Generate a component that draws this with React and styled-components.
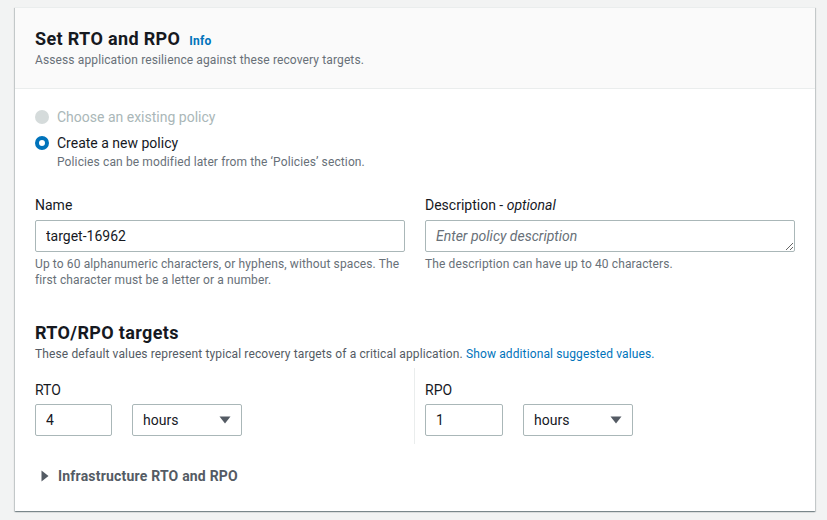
import React from "react";
import styled, { createGlobalStyle } from "styled-components";

const Global = createGlobalStyle`
  html, body { margin: 0; padding: 0; background: #f2f3f3; }
  body { font-family: Roboto, "Noto Sans", sans-serif; color: #16191f; -webkit-font-smoothing: antialiased; }
  * { box-sizing: border-box; }
`;

const Page = styled.div`
  padding: 7px 12px 8px 15px;
  height: 520px;
`;

const Card = styled.section`
  background: #fff;
  border-top: 1px solid #eaeded;
  box-shadow: 0 1px 1px 0 rgba(0, 28, 36, 0.3), 1px 1px 1px 0 rgba(0, 28, 36, 0.15),
    -1px 1px 1px 0 rgba(0, 28, 36, 0.15);
`;

const Header = styled.header`
  background: #fafafa;
  border-bottom: 1px solid #eaeded;
  padding: 20px 20px 20px;
`;

const TitleRow = styled.div`
  display: flex;
  align-items: baseline;
  gap: 9px;
`;

const Title = styled.h2`
  margin: 0;
  font-size: 18px;
  line-height: 22px;
  font-weight: 700;
  letter-spacing: 0.35px;
  color: #16191f;
`;

const InfoLink = styled.a`
  font-size: 12px;
  font-weight: 700;
  letter-spacing: 0.2px;
  color: #0073bb;
  text-decoration: none;
`;

const Desc = styled.p`
  margin: ${(p) => p.$mt || 0} 0 0;
  font-size: 12px;
  line-height: 16px;
  letter-spacing: 0.12px;
  color: ${(p) => p.$color || "#687078"};
`;

const Body = styled.div`
  padding: 18px 20px 25px;
`;

const RadioGroup = styled.div`
  display: flex;
  flex-direction: column;
  gap: 6px;
`;

const RadioRow = styled.label`
  display: grid;
  grid-template-columns: 14px 1fr;
  column-gap: 8px;
  align-items: center;
`;

const RadioDot = styled.span`
  width: 14px;
  height: 14px;
  border-radius: 50%;
  background: ${(p) => (p.$disabled ? "#d5dbdb" : "#fff")};
  border: ${(p) => (p.$checked ? "4px solid #0073bb" : p.$disabled ? "none" : "2px solid #aab7b8")};
`;

const RadioText = styled.span`
  font-size: 14px;
  line-height: 20px;
  color: ${(p) => (p.$disabled ? "#aab7b8" : "#16191f")};
`;

const RadioHint = styled.span`
  grid-column: 2;
  margin-top: 1px;
  font-size: 12px;
  line-height: 16px;
  letter-spacing: 0.12px;
  color: #687078;
`;

const FieldGrid = styled.div`
  display: grid;
  grid-template-columns: 1fr 1fr;
  column-gap: 20px;
  margin-top: 24px;
`;

const Field = styled.div`
  display: flex;
  flex-direction: column;
`;

const Label = styled.label`
  font-size: 14px;
  line-height: 22px;
  color: #16191f;
  margin-bottom: 4px;
  em { font-style: italic; }
`;

const TextInput = styled.input`
  width: ${(p) => p.$width || "100%"};
  height: 32px;
  border: 1px solid #aab7b8;
  border-radius: 2px;
  padding: 0 10px;
  font-family: inherit;
  font-size: 14px;
  color: #16191f;
  background: #fff;
  outline: none;
`;

const TextArea = styled.textarea`
  width: 100%;
  height: 32px;
  border: 1px solid #aab7b8;
  border-radius: 2px;
  padding: 5px 10px;
  font-family: inherit;
  font-size: 14px;
  line-height: 20px;
  color: #16191f;
  resize: vertical;
  outline: none;
  display: block;
  &::placeholder { color: #687078; font-style: italic; }
`;

const Hint = styled.p`
  margin: 4px 0 0;
  font-size: 12px;
  line-height: 16px;
  letter-spacing: 0.12px;
  color: #687078;
`;

const Section = styled.div`
  margin-top: 34px;
`;

const SubTitle = styled.h3`
  margin: 0;
  font-size: 18px;
  line-height: 22px;
  font-weight: 700;
  letter-spacing: 0.35px;
`;

const Link = styled.a`
  color: #0073bb;
  text-decoration: none;
`;

const Columns = styled.div`
  display: grid;
  grid-template-columns: 379px 1fr;
  margin-top: 6px;
`;

const Column = styled.div`
  padding: 11px 0 8px ${(p) => (p.$divider ? "10px" : "0")};
  border-left: ${(p) => (p.$divider ? "1px solid #eaeded" : "none")};
`;

const ColLabel = styled.div`
  font-size: 14px;
  line-height: 22px;
  margin-bottom: 3px;
`;

const Controls = styled.div`
  display: flex;
  gap: 20px;
`;

const Select = styled.div`
  width: 110px;
  height: 32px;
  border: 1px solid #aab7b8;
  border-radius: 2px;
  padding: 0 10px;
  display: flex;
  align-items: center;
  justify-content: space-between;
  font-size: 14px;
  color: #16191f;
`;

const Expander = styled.div`
  display: flex;
  align-items: center;
  gap: 9px;
  margin-top: 22px;
  padding-left: 6px;
  font-size: 14px;
  line-height: 20px;
  font-weight: 700;
  letter-spacing: 0.2px;
  color: #545b64;
`;

const Caret = ({ dir = "down" }) =>
  dir === "down" ? (
    <svg width="12" height="8" viewBox="0 0 12 8">
      <path d="M0.5 0.5 L11.5 0.5 L6 7.5 Z" fill="#545b64" />
    </svg>
  ) : (
    <svg width="8" height="12" viewBox="0 0 8 12">
      <path d="M0.5 0.5 L7.5 6 L0.5 11.5 Z" fill="#545b64" />
    </svg>
  );

const Target = ({ label, value, divider }) => (
  <Column $divider={divider}>
    <ColLabel>{label}</ColLabel>
    <Controls>
      <TextInput $width={divider ? "78px" : "77px"} defaultValue={value} />
      <Select>
        <span>hours</span>
        <Caret />
      </Select>
    </Controls>
  </Column>
);

export default function App() {
  return (
    <>
      <Global />
      <Page>
        <Card>
          <Header>
            <TitleRow>
              <Title>Set RTO and RPO</Title>
              <InfoLink href="#">Info</InfoLink>
            </TitleRow>
            <Desc $mt="2px">Assess application resilience against these recovery targets.</Desc>
          </Header>
          <Body>
            <RadioGroup>
              <RadioRow>
                <RadioDot $disabled />
                <RadioText $disabled>Choose an existing policy</RadioText>
              </RadioRow>
              <RadioRow>
                <RadioDot $checked />
                <RadioText>Create a new policy</RadioText>
                <RadioHint>Policies can be modified later from the ‘Policies’ section.</RadioHint>
              </RadioRow>
            </RadioGroup>
            <FieldGrid>
              <Field>
                <Label>Name</Label>
                <TextInput defaultValue="target-16962" />
                <Hint>
                  Up to 60 alphanumeric characters, or hyphens, without spaces. The first character must be a
                  letter or a number.
                </Hint>
              </Field>
              <Field>
                <Label>
                  Description - <em>optional</em>
                </Label>
                <TextArea placeholder="Enter policy description" />
                <Hint>The description can have up to 40 characters.</Hint>
              </Field>
            </FieldGrid>
            <Section>
              <SubTitle>RTO/RPO targets</SubTitle>
              <Desc $mt="2px" $color="#545b64">
                These default values represent typical recovery targets of a critical application.{" "}
                <Link href="#">Show additional suggested values.</Link>
              </Desc>
              <Columns>
                <Target label="RTO" value="4" />
                <Target label="RPO" value="1" divider />
              </Columns>
            </Section>
            <Expander>
              <Caret dir="right" />
              <span>Infrastructure RTO and RPO</span>
            </Expander>
          </Body>
        </Card>
      </Page>
    </>
  );
}
